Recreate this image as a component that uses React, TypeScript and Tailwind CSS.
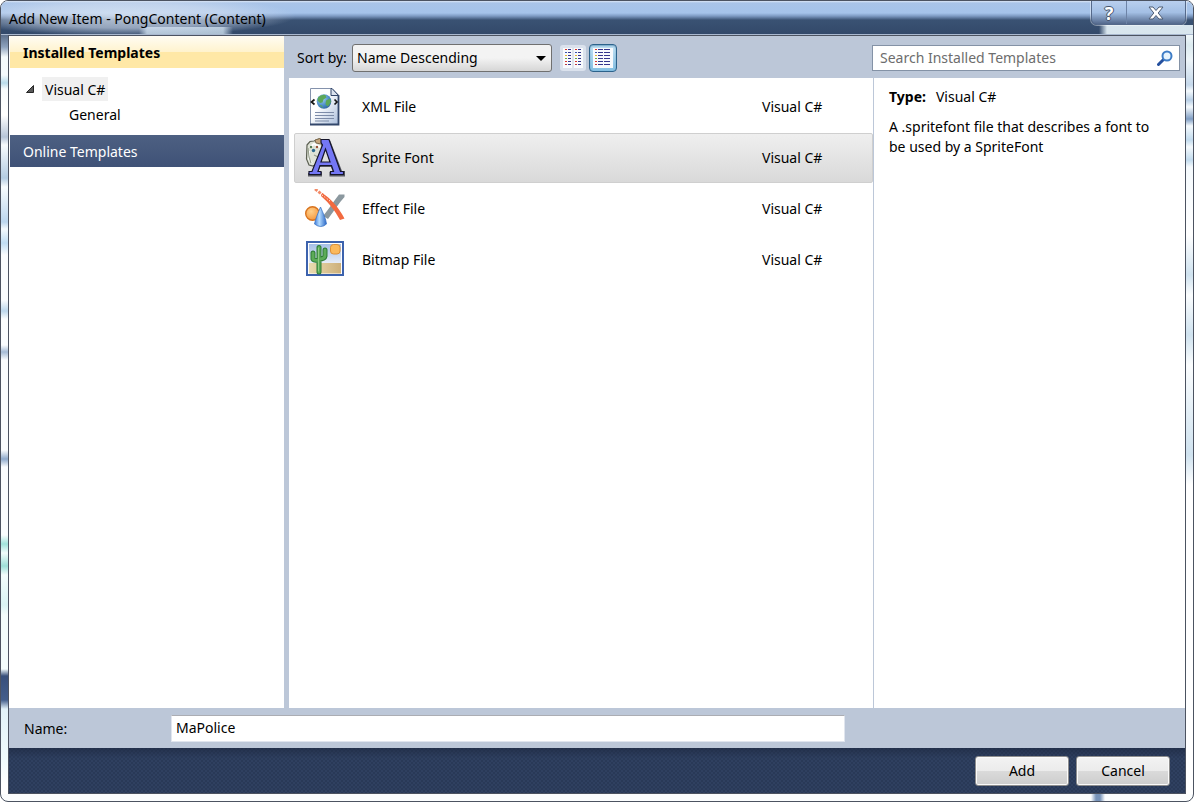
import { useState } from 'react'
import type { ReactNode } from 'react'

type Template = {
  name: string
  language: string
  icon: ReactNode
}

function XmlIcon() {
  return (
    <svg viewBox="0 0 40 40" className="size-10" aria-hidden="true">
      <defs>
        <linearGradient id="page" x1="0" y1="0" x2="1" y2="1">
          <stop offset="0.4" stopColor="#fdfeff" />
          <stop offset="1" stopColor="#a9bddb" />
        </linearGradient>
        <radialGradient id="globe" cx="0.35" cy="0.3" r="0.8">
          <stop offset="0" stopColor="#a9d8f5" />
          <stop offset="0.6" stopColor="#4a8cc8" />
          <stop offset="1" stopColor="#2a5d96" />
        </radialGradient>
      </defs>
      <path d="M5.500 1.500H27L33.500 8V37.500H5.500Z" fill="url(#page)" stroke="#8492ac" />
      <path d="M33.500 8V37.500H5" fill="none" stroke="#33476b" strokeWidth="1.800" />
      <path d="M26 1.500V8.500H33.500L27 1.500Z" fill="#dbe3ef" stroke="#33476b" />
      <circle cx="19" cy="14.500" r="7.300" fill="url(#globe)" />
      <path d="M13 10.500Q16 7 20.500 8L21.500 10.500L18.500 12.500L17.500 15.500L15 16L12.500 13.500ZM21 13.500L25 11.500L26 15L23 19.500L20.500 17.500ZM14 18L17 18.500L18 21Z" fill="#5aa75a" />
      <path d="M9.500 12.500L6.500 15L9.500 17.500M29.500 12.500L32 15L29.500 17.500" fill="none" stroke="#141414" strokeWidth="1.700" />
      <path d="M10 25.500H29M10 28.500H29M10 31.500H29M10 34H24" stroke="#7c8ba8" strokeWidth="1.200" />
    </svg>
  )
}

function SpriteFontIcon() {
  return (
    <svg viewBox="0 0 40 40" className="size-10" aria-hidden="true">
      <path d="M2 7L5 3.500L9 3L14 1L18 3L20 8L14 25L8 28L4 27L1.500 21Z" fill="#dfe3d6" stroke="#5c6053" strokeWidth="1.200" />
      <path d="M10 2L15 0.500L18.500 3.500L16 6L11 5Z" fill="#c6a77e" stroke="#7d6a4e" />
      <path d="M5 9L9 6L15 9M4 13V21L7 25" fill="none" stroke="#fff" strokeWidth="2" />
      <path d="M3 10L4 19L6 25M9 17L13 19" fill="none" stroke="#98a08d" strokeWidth="1.200" />
      <circle cx="8.500" cy="12.500" r="1.700" fill="#2c6a8c" />
      <circle cx="6" cy="9" r="1.200" fill="#52774e" />
      <circle cx="12" cy="9" r="1.200" fill="#9a5037" />
      <path d="M3 35H7L17 10L16 6V2H25L37 33H40V38.500H24.500V34H28L26 29H15L13 34H17V38.500H3Z" fill="#55565f" />
      <path d="M4 33.500H7L17.500 7L16 4.500V1.500H24L35.500 33.500H38.500V36.500H25.500V33.500H28.500L26.500 27.500H15L13 33.500H16V36.500H4Z" fill="#7477f5" stroke="#15152b" strokeWidth="1.200" />
      <path d="M20.500 11L16 24H25Z" fill="#dedede" stroke="#15152b" strokeWidth="1.200" />
    </svg>
  )
}

function EffectIcon() {
  return (
    <svg viewBox="0 0 40 40" className="size-10" aria-hidden="true">
      <defs>
        <radialGradient id="ball" cx="0.4" cy="0.35" r="0.7">
          <stop offset="0" stopColor="#ffd08a" />
          <stop offset="1" stopColor="#f6953a" />
        </radialGradient>
        <linearGradient id="cone">
          <stop offset="0" stopColor="#3c79d8" />
          <stop offset="0.4" stopColor="#b5dcff" />
          <stop offset="1" stopColor="#2966c6" />
        </linearGradient>
      </defs>
      <path d="M34 5.500H39.500V8C34 14 29 22 23 30L18 27C24 20 29 12 34 5.500Z" fill="#8b989f" />
      <path d="M10 0L18 6" stroke="#f28a67" strokeWidth="2.800" strokeDasharray="3 1.200" />
      <path d="M17 4C25 9 33 17 39.500 29.500L35 31C30 22 25 15 16 7Z" fill="#f26a40" />
      <path d="M17 6L25 12" stroke="#fff" strokeWidth="1" strokeDasharray="1 2" />
      <circle cx="7.500" cy="24.500" r="6.800" fill="url(#ball)" stroke="#d8731e" strokeWidth="1.400" />
      <path d="M15.500 18C18 24 21 30 21.500 35Q16 40 9.500 35C10.500 30 13 24 15.500 18Z" fill="url(#cone)" stroke="#3d76c5" strokeWidth="0.800" />
    </svg>
  )
}

function BitmapIcon() {
  return (
    <svg viewBox="0 0 40 40" className="size-10" aria-hidden="true">
      <defs>
        <linearGradient id="sky" x1="0" y1="0" x2="0" y2="1">
          <stop offset="0" stopColor="#a6bfe6" />
          <stop offset="1" stopColor="#e6edf7" />
        </linearGradient>
        <linearGradient id="sand">
          <stop offset="0" stopColor="#eadcb0" />
          <stop offset="1" stopColor="#cdb07a" />
        </linearGradient>
      </defs>
      <rect x="2" y="2" width="36" height="33" fill="#fff" stroke="#3c62ad" strokeWidth="2" />
      <rect x="4" y="4" width="32" height="19" fill="url(#sky)" />
      <rect x="4" y="23" width="32" height="10.500" fill="url(#sand)" />
      <rect x="25.500" y="4.500" width="9.500" height="9.500" rx="3" fill="#fbb95c" stroke="#dc9038" />
      <g fill="none" strokeLinecap="round" strokeLinejoin="round">
        <path d="M14 7.500V32M8 13V19Q8.500 20.500 14 20.500M20 10V16Q19.500 19 14 19" stroke="#2d7a35" strokeWidth="5" />
        <path d="M14 7.500V32M8 13V19Q8.500 20.500 14 20.500M20 10V16Q19.500 19 14 19" stroke="#5cab57" strokeWidth="3" />
        <path d="M13.500 8V31" stroke="#8fca83" strokeWidth="1" />
      </g>
    </svg>
  )
}

const templates: Template[] = [
  { name: 'XML File', language: 'Visual C#', icon: <XmlIcon /> },
  { name: 'Sprite Font', language: 'Visual C#', icon: <SpriteFontIcon /> },
  { name: 'Effect File', language: 'Visual C#', icon: <EffectIcon /> },
  { name: 'Bitmap File', language: 'Visual C#', icon: <BitmapIcon /> },
]

const marks = ['#d7352c', '#3c56ad', '#e6b12a', '#75a839', '#d7352c', '#b83a42']

function ViewIcon({ wide }: { wide?: boolean }) {
  return (
    <svg viewBox="0 0 20 20" className="size-5" aria-hidden="true">
      <rect x="0" y="0" width="20" height="20" fill="#f8fafd" />
      {marks.map((color, i) => {
        const y = 1 + i * 3
        return (
          <g key={i} shapeRendering="crispEdges">
            <rect x="2" y={y} width="2" height="1" fill={color} />
            {wide ? (
              <>
                <rect x="5" y={y} width="5" height="1" fill="#35358c" />
                <rect x="11" y={y} width="6" height="1" fill="#35358c" />
              </>
            ) : (
              <>
                <rect x="5" y={y} width="3" height="1" fill="#35358c" />
                <rect x="12" y={y} width="2" height="1" fill={color} />
                <rect x="15" y={y} width="3" height="1" fill="#35358c" />
              </>
            )}
          </g>
        )
      })}
      {!wide && <path d="M10 0V20" stroke="#c5cfdd" />}
    </svg>
  )
}

function TitleBar() {
  return (
    <header className="flex h-[34px] items-start justify-between border-b border-[#a9b8cf] bg-[radial-gradient(170px_20px_at_125px_15px,rgba(225,234,245,0.75)_0%,rgba(210,222,240,0.6)_60%,transparent_100%),linear-gradient(90deg,transparent_138px,rgba(205,224,238,0.8)_146px,rgba(205,224,238,0.8)_222px,transparent_232px),linear-gradient(90deg,transparent_1098px,rgba(225,238,245,0.95)_1106px),linear-gradient(#dbe6f5_0px,#a9c4e8_2px,#a5c3ea_12px,#7e9bc4_15px,#3a5273_19px,#33496a_33px)] bg-size-[100%_100%,100%_7px,100%_9px,100%_100%] bg-bottom bg-no-repeat pl-2">
      <h1 className="pt-2 text-sm leading-5 text-black">Add New Item - PongContent (Content)</h1>
      <div className="mr-[7px] flex h-6 rounded-b-md border border-t-0 border-[#55698a] bg-linear-to-b from-[#b9cfee] via-[#a3bfe4] to-[#53688b] shadow-[0_0_0_1px_rgba(255,255,255,0.4)]">
        <button aria-label="Help" className="flex w-[35px] items-center justify-center border-r border-[#6d83a6] text-lg leading-5 font-bold text-white [text-shadow:1px_0_#45536b,-1px_0_#45536b,0_1px_#45536b,0_-1px_#45536b]">
          ?
        </button>
        <button aria-label="Close" className="flex w-[58px] items-center justify-center">
          <svg viewBox="0 0 16 14" className="h-3.5 w-4" aria-hidden="true">
            <path d="M1 1H5L8 4.500L11 1H15L10.200 7L15 13H11L8 9.500L5 13H1L5.800 7Z" fill="#fff" stroke="#4e5c73" />
          </svg>
        </button>
      </div>
    </header>
  )
}

function Sidebar() {
  return (
    <nav aria-label="Templates" className="ml-px w-[274px] shrink-0 bg-white">
      <h2 className="h-8 bg-[linear-gradient(#fffcf3_0%,#fff3cd_50%,#ffe8a6_51%,#ffe8a6_100%)] pt-px pl-[13px] text-sm leading-8 font-bold">Installed Templates</h2>
      <div className="flex h-[67px] flex-col gap-px pt-[9px]">
        <div className="flex items-center pl-4">
          <svg viewBox="0 0 8 8" className="mr-2 size-2" aria-hidden="true">
            <path d="M7.500 0.500V7.500H0.500Z" fill="#595959" stroke="#262626" />
          </svg>
          <button className="h-6 bg-[#f0f0f0] px-[3px] pt-0.5 text-sm">Visual C#</button>
        </div>
        <button className="ml-[59px] h-6 self-start pt-0.5 text-sm">General</button>
      </div>
      <button className="h-8 w-full bg-linear-to-b from-[#4d6082] to-[#3f5277] pt-0.5 pl-[13px] text-left text-sm text-white">Online Templates</button>
    </nav>
  )
}

function Toolbar() {
  const [wide, setWide] = useState(true)

  return (
    <div className="flex h-[41px] items-center pr-[5px] pl-[13px]">
      <label htmlFor="sort" className="w-[55px] shrink-0 whitespace-nowrap">Sort by:</label>
      <div className="relative">
        <select id="sort" className="h-7 w-[200px] appearance-none rounded-[3px] border border-[#707070] bg-linear-to-b from-[#f3f3f3] from-50% to-[#d6d6d6] pl-1 text-sm">
          <option>Name Descending</option>
          <option>Name Ascending</option>
          <option>Default</option>
        </select>
        <svg viewBox="0 0 10 5" className="pointer-events-none absolute top-3 right-1.5 h-[5px] w-2.5" aria-hidden="true">
          <path d="M0 0H10L5 5Z" fill="#000" />
        </svg>
      </div>
      <button aria-label="Small icons" aria-pressed={!wide} onClick={() => setWide(false)} className="ml-2 flex h-[26px] w-[26px] items-center justify-center rounded-[3px] bg-[#dbe2ed]">
        <ViewIcon />
      </button>
      <button aria-label="Medium icons" aria-pressed={wide} onClick={() => setWide(true)} className="ml-[3px] flex h-7 w-7 items-center justify-center rounded-[4px] border border-[#2c628b] bg-linear-to-b from-[#c4e3f5] to-[#83bfe2] shadow-[inset_0_1px_2px_#6d9fc0]">
        <ViewIcon wide />
      </button>
      <div className="ml-auto flex h-[26px] w-[308px] items-center border border-[#8492a6] bg-white pr-1.5 pl-[7px]">
        <input aria-label="Search Installed Templates" placeholder="Search Installed Templates" className="min-w-0 flex-1 outline-none placeholder:text-[#6d6d6d]" />
        <svg viewBox="0 0 16 16" className="size-4" aria-hidden="true">
          <path d="M1.500 14.500L6.500 9.500" stroke="#244f9e" strokeWidth="3" strokeLinecap="round" />
          <circle cx="10" cy="6" r="4.500" fill="#e6f3fd" stroke="#3d7cc6" strokeWidth="2" />
        </svg>
      </div>
    </div>
  )
}

export default function App() {
  const [selected, setSelected] = useState('Sprite Font')

  return (
    <div className='flex min-h-screen flex-col overflow-hidden rounded-lg border border-[#4c5361] bg-[#fbfdfe] font-["Noto_Sans","Open_Sans",sans-serif] text-sm text-black'>
      <TitleBar />
      <div className="flex flex-1">
        <div className="w-[7px] bg-[linear-gradient(#5b6e8b_0px,#8ea2bd_12px,#f4fafc_22px,#f5fafd_40px,#b9dbeb_48px,#f7fbfd_54px,#fff_80px,#b7c5d8_102px,#f8fbfd_110px,#b4cce2_143px,#f8fcfe_152px,#bcd6ee_187px,#f5fafd_194px,#c0ddf3_208px,#fafcfe_220px,#fafcfe_265px,#bdd7ec_276px,#fbfdfe_284px,#fafcfe_310px,#a5bbd6_317px,#fafcfe_325px,#fafcfe_415px,#8ea9cb_424px,#fafcfe_432px,#fafcfe_500px,#a0e3db_509px,#f3fcfc_518px,#9edfd8_531px,#f3fcfc_540px,#d9f3f3_570px,#f3fcfc_580px,#f3fcfc_634px,#38507b_641px,#445e8b_665px,#e2f1f8_674px,#f0fbfc_725px,#fff_750px)]" />
        <div className="flex min-w-0 flex-1 flex-col border border-[#4c5361] bg-white">
          <div className="flex flex-1">
            <Sidebar />
            <main className="flex min-w-0 flex-1 flex-col bg-[#bcc7d8] pt-px">
              <Toolbar />
              <div className="ml-[5px] flex flex-1 bg-white">
                <ul className="min-w-0 flex-1 pt-[3px] pl-[5px]">
                  {templates.map((t) => (
                    <li key={t.name} className="pt-px">
                      <button
                        aria-pressed={selected === t.name}
                        onClick={() => setSelected(t.name)}
                        className={`flex h-[50px] w-full items-center rounded-[2px] border pl-2.5 text-left ${
                          selected === t.name ? 'border-[#cfcfcf] bg-linear-to-b from-[#efefef] to-[#d9d9d9]' : 'border-transparent'
                        }`}
                      >
                        {t.icon}
                        <span className="ml-[17px] flex-1">{t.name}</span>
                        <span className="w-[110px]">{t.language}</span>
                      </button>
                    </li>
                  ))}
                </ul>
                <aside className="w-[312px] shrink-0 border-l border-[#bcc7d8] pt-[9px] pr-5 pl-[15px]">
                  <p className="leading-5">
                    <b className="mr-2.5">Type:</b>Visual C#
                  </p>
                  <p className="mt-2.5 leading-5">A .spritefont file that describes a font to be used by a SpriteFont</p>
                </aside>
              </div>
            </main>
          </div>
          <div className="flex h-10 items-center bg-[#bcc7d8] pl-[15px]">
            <label htmlFor="name" className="w-[147px] shrink-0 pt-0.5">Name:</label>
            <input id="name" defaultValue="MaPolice" className="mr-[340px] h-[27px] min-w-0 flex-1 border border-[#e0e5ee] border-t-[#abadb3] bg-white px-1 pb-0.5 outline-none" />
          </div>
          <footer className="flex h-[45px] items-center justify-end gap-[7px] bg-[#2b3b5a] bg-[linear-gradient(rgba(31,43,68,0.7),transparent_10px),repeating-conic-gradient(#2f4060_0_25%,#293957_0_50%)] bg-size-[100%_100%,4px_4px] pr-[15px]">
            <button className="h-[30px] w-[94px] rounded-[3px] border border-[#8e8e8e] bg-[linear-gradient(#f3f3f3,#ebebeb_50%,#dadada_51%,#cdcdcd)] shadow-[inset_0_0_0_1px_#fafafa]">Add</button>
            <button className="h-[30px] w-[94px] rounded-[3px] border border-[#8e8e8e] bg-[linear-gradient(#f3f3f3,#ebebeb_50%,#dadada_51%,#cdcdcd)] shadow-[inset_0_0_0_1px_#fafafa]">Cancel</button>
          </footer>
        </div>
        <div className="w-[7px] bg-[linear-gradient(#f0f7fa_0px,#dcebf0_10px,#eef5f9_25px,#c5d8eb_50px,#f5fafd_56px,#b8cfe6_65px,#f5fafd_72px,#7f9dc3_84px,#f5fafd_91px,#c2dbee_105px,#f5fafd_112px,#c2dbee_125px,#f5fafd_132px,#fff_200px,#cfe2ef_240px,#fbfdfe_260px,#cfe2ef_300px,#fbfdfe_330px,#cfe2ef_420px,#fff_450px)]" />
      </div>
      <div className="h-[7px] bg-[linear-gradient(90deg,transparent_1090px,#7793b9_1095px,#7793b9_1099px,transparent_1104px)]" />
    </div>
  )
}
